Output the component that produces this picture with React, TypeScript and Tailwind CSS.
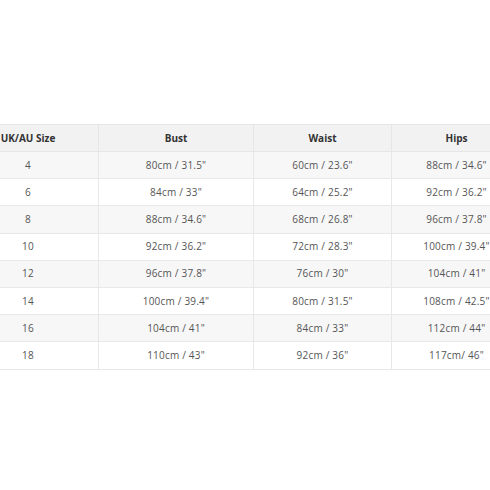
const rows = [
  ["4", '80cm / 31.5"', '60cm / 23.6"', '88cm / 34.6"'],
  ["6", '84cm / 33"', '64cm / 25.2"', '92cm / 36.2"'],
  ["8", '88cm / 34.6"', '68cm / 26.8"', '96cm / 37.8"'],
  ["10", '92cm / 36.2"', '72cm / 28.3"', '100cm / 39.4"'],
  ["12", '96cm / 37.8"', '76cm / 30"', '104cm / 41"'],
  ["14", '100cm / 39.4"', '80cm / 31.5"', '108cm / 42.5"'],
  ["16", '104cm / 41"', '84cm / 33"', '112cm / 44"'],
  ["18", '110cm / 43"', '92cm / 36"', '117cm/ 46"'],
];

const widths = ["w-[141px]", "w-[155px]", "w-[138px]", "w-[130px]"];

export default function App() {
  return (
    <div className="w-[490px] h-[490px] overflow-hidden bg-white pt-[124px] font-['Open_Sans',sans-serif]">
      <table className="ml-[-43px] border-collapse table-fixed w-[564px]">
        <thead>
          <tr className="bg-[#f2f2f2] h-[27px]">
            {["UK/AU Size", "Bust", "Waist", "Hips"].map((h, i) => (
              <th
                key={h}
                className={`${widths[i]} border border-[#e6e6e6] text-[10px] font-bold text-[#333] text-center p-0`}
              >
                {h}
              </th>
            ))}
          </tr>
        </thead>
        <tbody>
          {rows.map((r, ri) => (
            <tr key={r[0]} className={`h-[27.2px] ${ri % 2 === 0 ? "bg-[#f7f7f7]" : "bg-white"}`}>
              {r.map((c, ci) => (
                <td
                  key={ci}
                  className="border border-[#e8e8e8] text-[10px] text-[#555] text-center p-0 tracking-[0.2px]"
                >
                  {c}
                </td>
              ))}
            </tr>
          ))}
        </tbody>
      </table>
    </div>
  );
}
